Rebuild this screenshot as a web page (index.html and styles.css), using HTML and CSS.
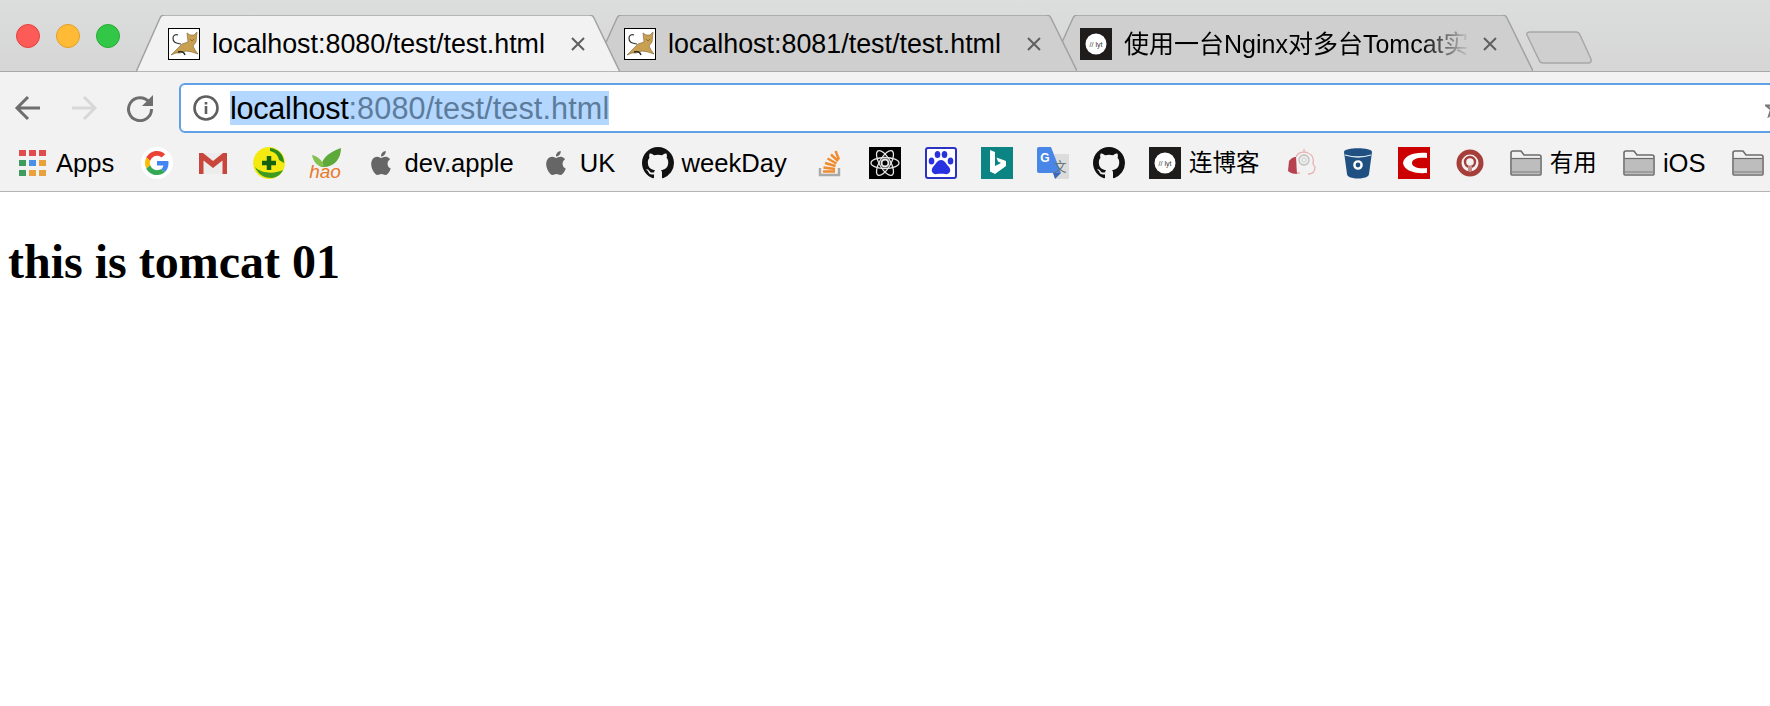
FILE: index.html
```html
<!DOCTYPE html>
<html lang="en">
<head>
    <meta charset="UTF-8">
    <meta name="viewport" content="width=device-width, initial-scale=1.0">
    <title>localhost:8080/test/test.html</title>
    <link rel="stylesheet" href="styles.css">
</head>
<body>
    <svg class="defs" aria-hidden="true">
        <symbol id="tomcat" viewBox="0 0 32 32">
            <rect x=".5" y=".5" width="31" height="31" fill="#fff" stroke="#000" stroke-width="1"/>
            <path d="M3 27 L9 21 L14 16 L20 14 L19 5 L22 7 L26 7 L29 4 L28 14 L25 18 L27 22 L30 26 L24 24 L18 23 L12 25 L8 25 Z" fill="#c9a052" stroke="#7a6230" stroke-width=".6"/>
            <path d="M13 16 C8 15 5 15 5 10 C5 7 8 6 10 7" fill="none" stroke="#333" stroke-width="1.2"/>
            <path d="M10 24 C13 23 16 24 17 27" fill="none" stroke="#222" stroke-width="1.4"/>
            <path d="M22 11 L24 13 L26 11" fill="none" stroke="#7a6230" stroke-width=".8"/>
        </symbol>
        <symbol id="lyt" viewBox="0 0 32 32">
            <rect width="32" height="32" fill="#1f1c1c"/>
            <circle cx="16" cy="16" r="10.5" fill="#fff"/>
            <text x="16" y="18.5" text-anchor="middle" class="lyt-text">// lyt</text>
        </symbol>
        <symbol id="apple" viewBox="-4 -4 32 32">
            <path fill="#666" d="M12.152 6.896c-.948 0-2.415-1.078-3.96-1.04-2.04.027-3.91 1.183-4.961 3.014-2.117 3.675-.546 9.103 1.519 12.09 1.013 1.454 2.208 3.09 3.792 3.039 1.52-.065 2.09-.987 3.935-.987 1.831 0 2.35.987 3.96.948 1.637-.026 2.676-1.48 3.676-2.948 1.156-1.688 1.636-3.325 1.662-3.415-.039-.013-3.182-1.221-3.22-4.857-.026-3.04 2.48-4.494 2.597-4.559-1.429-2.09-3.623-2.324-4.39-2.376-2-.156-3.675 1.09-4.61 1.09zM15.53 3.83c.843-1.012 1.4-2.427 1.245-3.83-1.207.052-2.662.805-3.532 1.818-.78.896-1.454 2.338-1.273 3.714 1.338.104 2.715-.688 3.559-1.701"/>
        </symbol>
        <symbol id="github" viewBox="0 0 16 16">
            <path fill="#111" d="M8 0C3.58 0 0 3.58 0 8c0 3.54 2.29 6.53 5.47 7.59.4.07.55-.17.55-.38 0-.19-.01-.82-.01-1.49-2.01.37-2.53-.49-2.69-.94-.09-.23-.48-.94-.82-1.13-.28-.15-.68-.52-.01-.53.63-.01 1.08.58 1.23.82.72 1.21 1.87.87 2.33.66.07-.52.28-.87.51-1.07-1.78-.2-3.64-.89-3.64-3.95 0-.87.31-1.59.82-2.15-.08-.2-.36-1.02.08-2.12 0 0 .67-.21 2.2.82.64-.18 1.32-.27 2-.27.68 0 1.36.09 2 .27 1.53-1.04 2.2-.82 2.2-.82.44 1.1.16 1.92.08 2.12.51.56.82 1.27.82 2.15 0 3.07-1.87 3.75-3.65 3.95.29.25.54.73.54 1.48 0 1.07-.01 1.93-.01 2.2 0 .21.15.46.55.38A8.013 8.013 0 0016 8c0-4.42-3.58-8-8-8z"/>
        </symbol>
        <symbol id="folder" viewBox="0 0 32 26">
            <path d="M1 24 V3 Q1 1 3 1 H11 L14 5 H29 Q31 5 31 7 V24 Q31 25 30 25 H2 Q1 25 1 24 Z" fill="#f1f1f1" stroke="#6b6b6b" stroke-width="1.6"/>
            <path d="M2 9 H30 V24 H2 Z" fill="#bdbdbd"/>
            <path d="M1.5 8.5 H30.5" stroke="#6b6b6b" stroke-width="1.2"/>
            <path d="M2 22 H30" stroke="#9d9d9d" stroke-width="2"/>
        </symbol>
        <symbol id="close" viewBox="0 0 16 16">
            <path d="M2 2 L14 14 M14 2 L2 14" stroke="#5f5f5f" stroke-width="2" fill="none"/>
        </symbol>
    </svg>

    <div class="tabstrip">
        <div class="lights">
            <span class="light red"></span>
            <span class="light yellow"></span>
            <span class="light green"></span>
        </div>
        <div class="tab active">
            <svg class="tab-shape" viewBox="0 0 484 57" preserveAspectRatio="none"><path d="M0 57 L24 3 Q25 0 29 0 H453 Q457 0 458 3 L484 57 Z"/></svg>
            <svg class="favicon"><use href="#tomcat"/></svg>
            <span class="tab-title">localhost:8080/test/test.html</span>
            <svg class="tab-close"><use href="#close"/></svg>
        </div>
        <div class="tab second">
            <svg class="tab-shape" viewBox="0 0 484 56" preserveAspectRatio="none"><path d="M0 56 L24 3 Q25 0 29 0 H453 Q457 0 458 3 L484 56"/></svg>
            <svg class="favicon"><use href="#tomcat"/></svg>
            <span class="tab-title">localhost:8081/test/test.html</span>
            <svg class="tab-close"><use href="#close"/></svg>
        </div>
        <div class="tab third">
            <svg class="tab-shape" viewBox="0 0 484 56" preserveAspectRatio="none"><path d="M0 56 L24 3 Q25 0 29 0 H453 Q457 0 458 3 L484 56"/></svg>
            <svg class="favicon"><use href="#lyt"/></svg>
            <span class="tab-title fade">使用一台Nginx对多台Tomcat实现</span>
            <svg class="tab-close"><use href="#close"/></svg>
        </div>
        <svg class="newtab" viewBox="0 0 66 33"><path d="M1 4 Q0 1 4 1 H50 Q53 1 54 4 L65 28 Q66 32 62 32 H17 Q14 32 13 29 Z"/></svg>
    </div>

    <div class="toolbar">
        <svg class="nav" viewBox="0 0 28 28"><path d="M26 14 H4 M14 3 L3 14 L14 25" fill="none" stroke="#6e6e6e" stroke-width="3"/></svg>
        <svg class="nav" viewBox="0 0 28 28"><path d="M2 14 H24 M14 3 L25 14 L14 25" fill="none" stroke="#d8d8d8" stroke-width="3"/></svg>
        <svg class="nav" viewBox="0 0 28 28"><path d="M23 8 A11.5 11.5 0 1 0 25.5 15" fill="none" stroke="#6e6e6e" stroke-width="3"/><path d="M27 1 V12 H16 Z" fill="#6e6e6e"/></svg>
        <div class="omnibox">
            <svg class="info" viewBox="0 0 26 26"><circle cx="13" cy="13" r="11.5" fill="none" stroke="#5f5f5f" stroke-width="2.6"/><path d="M13 11 V19 M13 7 V9.4" stroke="#5f5f5f" stroke-width="2.6"/></svg>
            <span class="url"><b class="host">localhost</b><span class="port">:8080/test/test.html</span></span>
            <svg class="star" viewBox="0 0 20 20"><path d="M10 1 L12.5 7.5 H19 L14 11.5 L16 18 L10 14 L4 18 L6 11.5 L1 7.5 H7.500 Z" fill="none" stroke="#777" stroke-width="2"/></svg>
        </div>
    </div>

    <div class="bookmarks">
        <div class="bm">
            <div class="apps">
                <i class="r"></i><i class="r"></i><i class="r"></i>
                <i class="g"></i><i class="b"></i><i class="o"></i>
                <i class="g"></i><i class="o"></i><i class="o"></i>
            </div>
            <span class="bm-label">Apps</span>
        </div>
        <div class="bm">
            <svg class="ico" viewBox="0 0 32 32">
                <circle cx="16" cy="16" r="16" fill="#fff"/>
                <g transform="translate(4 4) scale(.5)">
                    <path fill="#EA4335" d="M24 9.5c3.54 0 6.71 1.22 9.21 3.6l6.85-6.85C35.9 2.38 30.47 0 24 0 14.62 0 6.51 5.38 2.56 13.22l7.98 6.19C12.43 13.72 17.74 9.5 24 9.5z"/>
                    <path fill="#4285F4" d="M46.98 24.55c0-1.57-.15-3.09-.38-4.55H24v9.02h12.94c-.58 2.96-2.26 5.48-4.78 7.18l7.73 6c4.51-4.18 7.09-10.36 7.09-17.65z"/>
                    <path fill="#FBBC05" d="M10.53 28.59c-.5-1.45-.78-2.99-.78-4.59s.27-3.14.78-4.59l-7.98-6.19C.92 16.46 0 20.12 0 24c0 3.88.92 7.54 2.56 10.78l7.97-6.19z"/>
                    <path fill="#34A853" d="M24 48c6.48 0 11.93-2.13 15.89-5.81l-7.73-6c-2.15 1.45-4.92 2.3-8.16 2.3-6.26 0-11.57-4.22-13.47-9.91l-7.98 6.19C6.51 42.62 14.62 48 24 48z"/>
                </g>
            </svg>
        </div>
        <div class="bm">
            <svg class="ico" viewBox="0 0 32 32">
                <path d="M2 6 H30 V27 H2 Z" fill="#ececec"/>
                <path d="M2 27 V6 H6 L16 14 L26 6 H30 V27 H25.500 V13.500 L16 21 L6.500 13.500 V27 Z" fill="#c9463c"/>
            </svg>
        </div>
        <div class="bm">
            <svg class="ico" viewBox="0 0 32 32">
                <circle cx="16" cy="16" r="16" fill="#f4ea12"/>
                <path d="M17 1 C26 2 31 8 31 16 L26 13 C25 8 22 5 17 4 Z" fill="#2d8a1d"/>
                <path d="M2 20 C5 28 12 31 19 31 C25 30 28 27 30 23 C24 26 10 28 2 20 Z" fill="#3f9a22"/>
                <path d="M16 9 V23 M9 16 H23" stroke="#14610f" stroke-width="4.500"/>
            </svg>
        </div>
        <div class="bm">
            <svg class="ico" viewBox="0 0 32 32">
                <path d="M12 20 C13 10 21 5 32 1 C32 12 25 21 12 20 Z" fill="#5da93a"/>
                <path d="M13 20 C8 19 4 14 3 8 C8 9 13 13 15 18 Z" fill="#85c14f"/>
                <text x="16" y="31" text-anchor="middle" class="hao-text">hao</text>
            </svg>
        </div>
        <div class="bm">
            <svg class="ico"><use href="#apple"/></svg>
            <span class="bm-label">dev.apple</span>
        </div>
        <div class="bm">
            <svg class="ico"><use href="#apple"/></svg>
            <span class="bm-label">UK</span>
        </div>
        <div class="bm">
            <svg class="ico"><use href="#github"/></svg>
            <span class="bm-label">weekDay</span>
        </div>
        <div class="bm">
            <svg class="ico" viewBox="0 0 32 32">
                <path d="M7 21 V28 H26 V21" fill="none" stroke="#a9a9a9" stroke-width="2.400"/>
                <path d="M10 24.500 H22 M10.500 20.500 L22 22 M12 16 L22.500 19 M14.500 11.500 L23.500 16.500 M18 7.500 L25 14 M22.500 4 L26 12.500" stroke="#f08a2c" stroke-width="2.400"/>
            </svg>
        </div>
        <div class="bm">
            <svg class="ico" viewBox="0 0 32 32">
                <rect width="32" height="32" fill="#000"/>
                <g fill="none" stroke="#e6e6e6" stroke-width="1.300">
                    <ellipse cx="16" cy="16" rx="14" ry="5.500"/>
                    <ellipse cx="16" cy="16" rx="14" ry="5.500" transform="rotate(60 16 16)"/>
                    <ellipse cx="16" cy="16" rx="14" ry="5.500" transform="rotate(120 16 16)"/>
                    <circle cx="16" cy="16" r="3.500" stroke-width="2"/>
                </g>
            </svg>
        </div>
        <div class="bm">
            <svg class="ico" viewBox="0 0 32 32">
                <rect x="1" y="1" width="30" height="30" rx="2" fill="#fff" stroke="#2a32c4" stroke-width="2"/>
                <g fill="#2932e1">
                    <ellipse cx="6.500" cy="14" rx="2.800" ry="3.500"/>
                    <ellipse cx="12.500" cy="7.500" rx="2.800" ry="3.600"/>
                    <ellipse cx="19.500" cy="7.500" rx="2.800" ry="3.600"/>
                    <ellipse cx="25.500" cy="14" rx="2.800" ry="3.500"/>
                    <path d="M16 13 C20 13 21 17 24 20 C27 24 24 28 20 27 C18 26.500 14 26.500 12 27 C8 28 5 24 8 20 C11 17 12 13 16 13 Z"/>
                </g>
            </svg>
        </div>
        <div class="bm">
            <svg class="ico" viewBox="0 0 32 32">
                <rect width="32" height="32" fill="#0c8484"/>
                <path d="M9 3 L14 5 V19 L20 16 L17 14.500 L15.500 10.500 L25 14 V19 L14 27 L9 24.500 Z" fill="#fff"/>
            </svg>
        </div>
        <div class="bm">
            <svg class="ico" viewBox="0 0 32 32">
                <path d="M14 7 H32 V32 H18 Z" fill="#dcdcdc"/>
                <path d="M2 0 H14 L24 26 H2 Q0 26 0 24 V2 Q0 0 2 0 Z" fill="#4a86e8"/>
                <path d="M16 26 H24 L18 32 Z" fill="#3a67b8"/>
                <text x="8" y="15" text-anchor="middle" class="g-text">G</text>
                <text x="23" y="24" text-anchor="middle" class="wen-text">文</text>
            </svg>
        </div>
        <div class="bm">
            <svg class="ico"><use href="#github"/></svg>
        </div>
        <div class="bm">
            <svg class="ico"><use href="#lyt"/></svg>
            <span class="bm-label cjk">连博客</span>
        </div>
        <div class="bm">
            <svg class="ico" viewBox="0 0 32 32">
                <path d="M3 14 C6 10 9 10 10 10 L11 27 C7 27 4 26 2 24 Z" fill="#b8414f"/>
                <path d="M10 10 C12 5 18 4 22 6 C27 8 28 13 27 17 L29 20 C29 25 26 27 22 27 M18 2 V4 M11 26 H14" fill="none" stroke="#e7b3b3" stroke-width="1.300"/>
                <circle cx="18" cy="13" r="5" fill="none" stroke="#bdbdbd" stroke-width="1.300"/>
                <circle cx="18" cy="13" r="2.200" fill="none" stroke="#c9c9c9" stroke-width="1"/>
            </svg>
        </div>
        <div class="bm">
            <svg class="ico" viewBox="0 0 32 32">
                <path d="M2 5 C2 0 30 0 30 5 L27 27 C27 33 5 33 5 27 Z" fill="#205081"/>
                <path d="M3 8 Q16 12 29 8" fill="none" stroke="#e6edf3" stroke-width="1.300"/>
                <circle cx="16" cy="18" r="3.600" fill="none" stroke="#fff" stroke-width="2.400"/>
            </svg>
        </div>
        <div class="bm">
            <svg class="ico" viewBox="0 0 32 32">
                <rect width="32" height="32" fill="#cc0000"/>
                <path d="M29 6 C15 5 6 9 5 16 C6 23 15 27 29 26 L29 21 C20 22 14 20 14 16 C14 12 20 10 29 11 Z" fill="#fff"/>
            </svg>
        </div>
        <div class="bm">
            <svg class="ico" viewBox="0 0 32 32">
                <circle cx="16" cy="16" r="11" fill="none" stroke="#a63f3a" stroke-width="5"/>
                <circle cx="16" cy="15" r="5" fill="none" stroke="#a63f3a" stroke-width="2.400"/>
                <path d="M14 19 V24 H18 V19" fill="#c98a86"/>
            </svg>
        </div>
        <div class="bm">
            <svg class="ico"><use href="#folder"/></svg>
            <span class="bm-label cjk">有用</span>
        </div>
        <div class="bm">
            <svg class="ico"><use href="#folder"/></svg>
            <span class="bm-label">iOS</span>
        </div>
        <div class="bm">
            <svg class="ico"><use href="#folder"/></svg>
        </div>
    </div>

    <h1>this is tomcat 01</h1>
</body>
</html>
```
FILE: styles.css
```css
*{
    box-sizing: border-box;
}
body{
    margin: 0;
    width: 1770px;
    height: 706px;
    overflow: hidden;
    background: #fff;
    font-family: "Liberation Sans", "Noto Sans CJK SC", sans-serif;
    color: #000;
}
.defs{
    position: absolute;
    width: 0;
    height: 0;
}
.lyt-text{
    font-size: 7px;
    font-family: "Liberation Sans", sans-serif;
    fill: #333;
}

/* tab strip */
.tabstrip{
    position: relative;
    display: flex;
    height: 72px;
    padding: 15px 0 0 0;
    background: linear-gradient(#dcdddd, #d6d6d6);
    border-bottom: 1px solid #a8a8a8;
}
.lights{
    display: flex;
    gap: 16px;
    width: 136px;
    padding: 9px 0 0 16px;
}
.light{
    width: 24px;
    height: 24px;
    border-radius: 50%;
}
.red{
    background: #fc5b57;
    border: 1px solid #e3433f;
}
.yellow{
    background: #ffbb36;
    border: 1px solid #e0a028;
}
.green{
    background: #33c748;
    border: 1px solid #27aa35;
}
.tab{
    position: relative;
    display: flex;
    align-items: flex-start;
    width: 484px;
    height: 56px;
    margin-left: -27px;
    padding: 13px 0 0 31px;
}
.tab.active{
    height: 57px;
    margin-left: 0;
    padding-left: 32px;
    z-index: 3;
}
.tab.second{
    z-index: 2;
}
.tab.third{
    margin-left: -28px;
    z-index: 1;
}
.tab-shape{
    position: absolute;
    left: 0;
    top: 0;
    width: 100%;
    height: 100%;
    fill: #cfcfcf;
    stroke: #a2a2a2;
    stroke-width: 1.500px;
}
.active .tab-shape{
    fill: #f2f2f2;
}
.favicon{
    position: relative;
    flex: none;
    width: 32px;
    height: 32px;
}
.tab-title{
    position: relative;
    flex: none;
    width: 357px;
    margin-left: 12px;
    font-size: 26.870px;
    line-height: 32px;
    white-space: nowrap;
    overflow: hidden;
}
.tab-title.fade{
    font-size: 25px;
    -webkit-mask-image: linear-gradient(to right, #000 83%, transparent 97%);
    mask-image: linear-gradient(to right, #000 83%, transparent 97%);
}
.tab-close{
    position: relative;
    flex: none;
    width: 16px;
    height: 16px;
    margin: 8px 0 0 1px;
}
.newtab{
    flex: none;
    width: 66px;
    height: 33px;
    margin: 16px 0 0 -7px;
    fill: #cfcfcf;
    stroke: #a8a8a8;
    stroke-width: 1.500px;
}

/* toolbar */
.toolbar{
    display: flex;
    align-items: center;
    gap: 28px;
    height: 61px;
    padding: 11px 0 0 14px;
    background: #f2f2f2;
}
.nav{
    flex: none;
    width: 28px;
    height: 28px;
}
.omnibox{
    display: flex;
    align-items: center;
    flex: none;
    width: 1610px;
    height: 50px;
    margin-left: -3px;
    padding-left: 12px;
    background: #fff;
    border: 2px solid #619fe6;
    border-radius: 6px;
}
.info{
    flex: none;
    width: 26px;
    height: 26px;
}
.url{
    margin-left: 11px;
    font-size: 30.600px;
    line-height: 34px;
    color: #5d7c9c;
    background: #b3d7fe;
}
.host{
    font-weight: normal;
    letter-spacing: -.25px;
    color: #000;
}
.port{
    letter-spacing: .12px;
}
.star{
    flex: none;
    width: 20px;
    height: 20px;
    margin-left: 1156px;
}

/* bookmarks */
.bookmarks{
    display: flex;
    align-items: center;
    gap: 24px;
    height: 59px;
    padding: 2px 0 0 16px;
    background: #f2f2f2;
    border-bottom: 1px solid #b4b4b4;
    white-space: nowrap;
}
.bm{
    display: flex;
    align-items: center;
    flex: none;
}
.ico{
    flex: none;
    width: 32px;
    height: 32px;
    overflow: visible;
}
.bm-label{
    margin: 0 2.200px 0 8px;
    font-size: 25.600px;
    line-height: 32px;
}
.bm-label.cjk{
    font-size: 23.500px;
}
.apps{
    display: grid;
    grid-template-columns: repeat(3, 7px);
    grid-auto-rows: 6px;
    gap: 4px 3px;
    width: 32px;
    padding-left: 3px;
}
.apps i{
    display: block;
}
.apps .r{
    background: #e04b4b;
}
.apps .g{
    background: #3f9b5e;
}
.apps .b{
    background: #4a90e8;
}
.apps .o{
    background: #e9a23b;
}
.hao-text{
    font-size: 19px;
    font-style: italic;
    font-family: "Liberation Sans", sans-serif;
    fill: #e8792b;
}
.g-text{
    font-size: 12px;
    font-weight: bold;
    font-family: "Liberation Sans", sans-serif;
    fill: #fff;
}
.wen-text{
    font-size: 13px;
    font-family: "Noto Sans CJK SC", sans-serif;
    fill: #66767a;
}

/* page content */
h1{
    margin: 42px 0 0 8px;
    font-family: "Liberation Serif", "Noto Sans CJK SC", serif;
    font-size: 48px;
    font-weight: bold;
}
```
